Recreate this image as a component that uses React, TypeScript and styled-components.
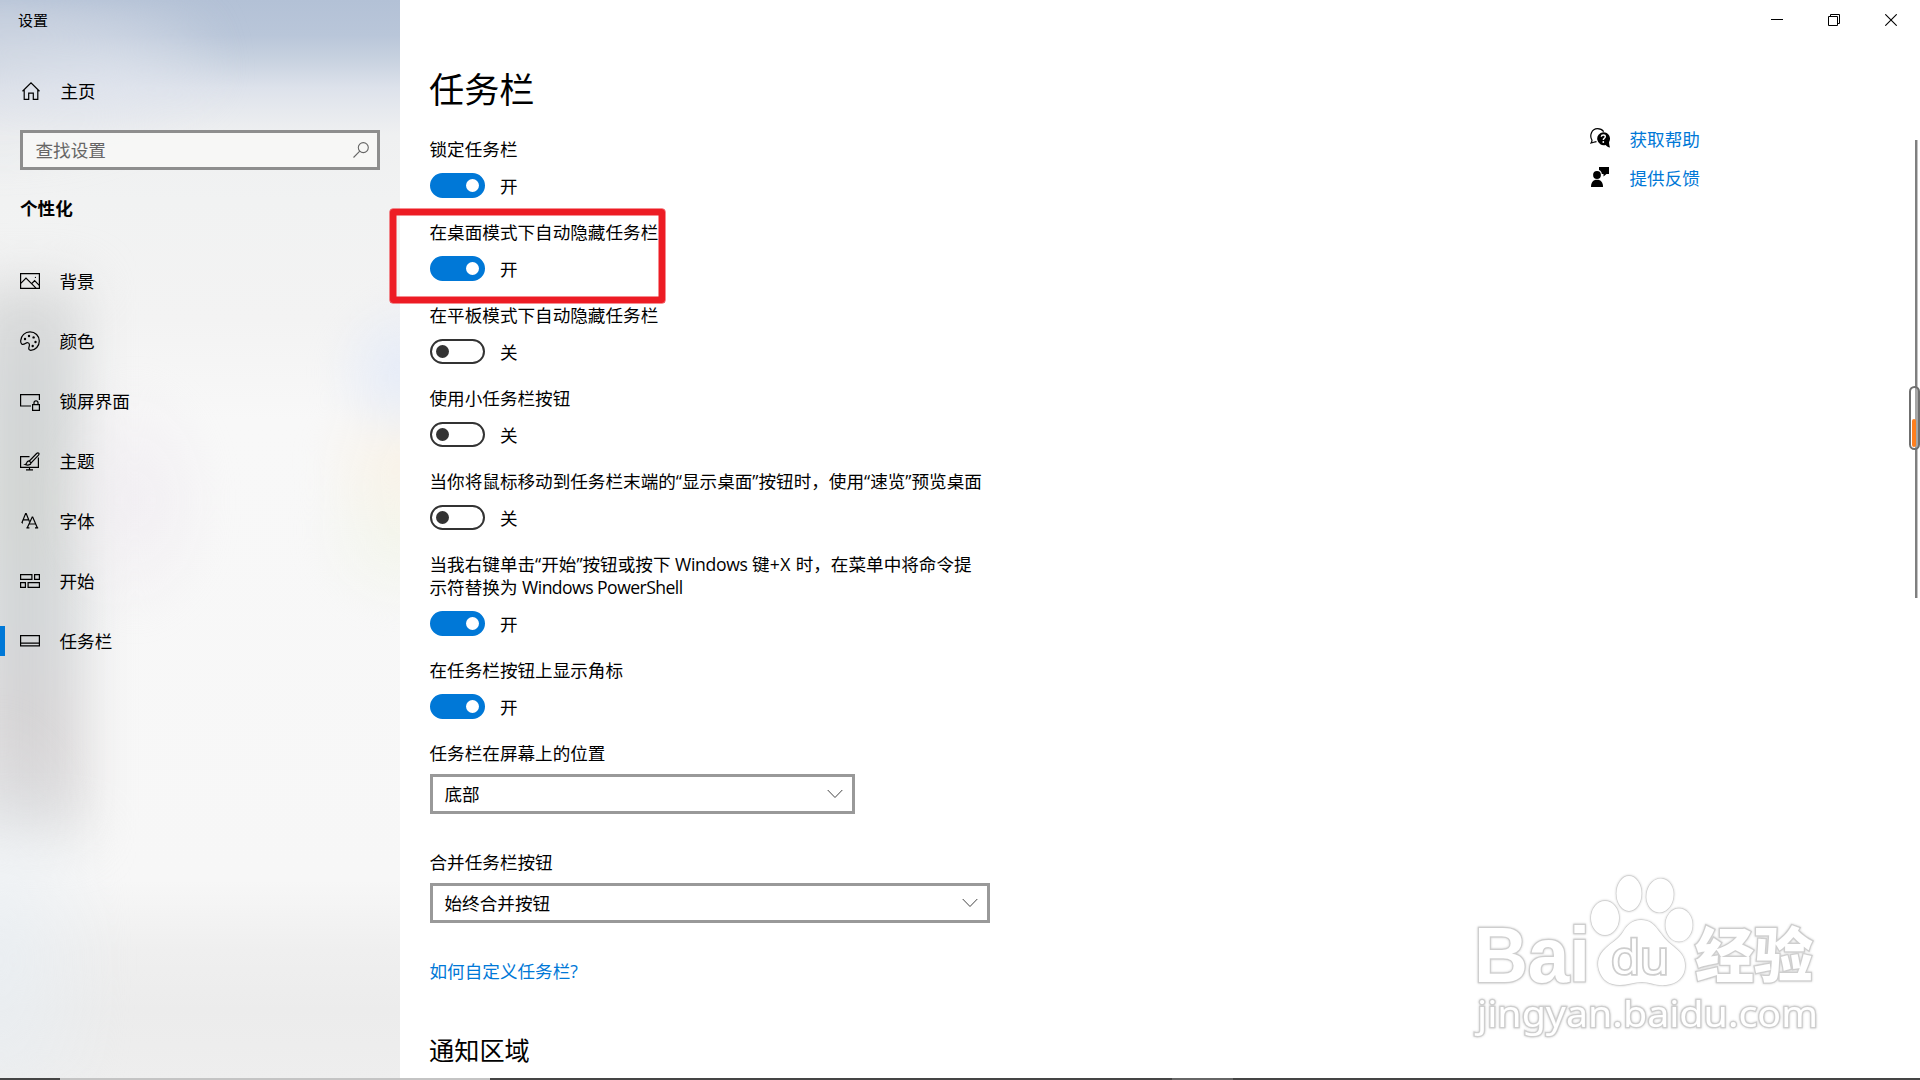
import React, { useState } from 'react';
import styled, { createGlobalStyle } from 'styled-components';

const GlobalStyle = createGlobalStyle`
    *{
        box-sizing:border-box;
    }
    body{
        margin:0;
        overflow:hidden;
        background-color:#ffffff;
        color:#000000;
        font-family:"Open Sans", "Noto Sans CJK SC", sans-serif;
        font-size:17.6px;
        line-height:23px;
    }
`;

const Container = styled.div`
    width:1920px;
    height:1080px;

    position:relative;
    overflow:hidden;
    display:flex;
`;

const Sidebar = styled.aside`
    width:400px;
    height:1080px;

    position:relative;
    overflow:hidden;
    isolation:isolate;
    display:flex;
    flex-direction:column;

    background:linear-gradient(to bottom, #b3c1d6 0px, #b9c6d9 35px, #c8d2e0 60px, #dde2eb 88px, #e6e9ee 110px, #eff0f1 135px, #f1f2f2 200px, #f3f3f3 320px, #f8f8f8 420px, #f7f7f7 880px, #efefef 950px, #ececec 1010px, #eeeeee 1080px);

    /* dark part of the acrylic backdrop */
    &::before{
        content:"";
        position:absolute;
        z-index:-1;
        left:-30px;
        top:285px;
        width:112px;
        height:550px;
        background:linear-gradient(to bottom, #dadbdb 0%, #d2d5d6 20%, #d2d5d3 40%, #d3d6d8 60%, #d6d3d4 85%, #dcdcdd 100%);
        filter:blur(26px);
    }
    /* tinted spots of the acrylic backdrop */
    &::after{
        content:"";
        position:absolute;
        z-index:-1;
        inset:0 -40px 0 -40px;
        background:
            radial-gradient(ellipse 80px 80px at 445px 372px, rgba(224,232,248,0.8), rgba(226,233,248,0)),
            radial-gradient(ellipse 100px 85px at 450px 460px, rgba(249,241,228,0.8), rgba(249,241,228,0)),
            radial-gradient(ellipse 100px 90px at 445px 530px, rgba(241,244,230,0.7), rgba(242,245,230,0)),
            radial-gradient(ellipse 90px 130px at 175px 500px, rgba(236,230,238,0.5), rgba(236,230,238,0)),
            radial-gradient(ellipse 130px 70px at 150px 75px, rgba(228,232,241,0.45), rgba(228,232,241,0)),
            radial-gradient(ellipse 240px 130px at 40px 50px, rgba(218,222,230,0.6), rgba(218,222,230,0)),
            radial-gradient(ellipse 120px 260px at 40px 960px, rgba(232,238,243,0.7), rgba(232,238,243,0));
        filter:blur(12px);
    }
`;

const WindowTitle = styled.div`
    padding:9px 0 0 18px;
    font-size:15px;
    line-height:22px;
`;

const HomeLink = styled.div`
    height:40px;
    margin-top:40px;
    padding-left:22px;

    display:flex;
    align-items:center;
    gap:20.5px;
`;

const SearchBox = styled.div`
    width:360px;
    height:40px;
    margin:19px 0 0 20px;
    padding:0 8px 0 12.5px;

    display:flex;
    align-items:center;
    justify-content:space-between;

    border:3px solid #8e8e8e;
    background-color:rgba(248,248,247,0.85);
    color:#666666;
`;

const SectionName = styled.h2`
    margin:27px 0 31px 20px;
    font-size:17.6px;
    font-weight:700;
    line-height:23px;
`;

const NavItem = styled.div<{ $active?: boolean }>`
    height:60px;

    display:flex;
    align-items:center;

    &::before{
        content:"";
        width:5px;
        height:30px;
        margin-right:15px;
        background-color:${(props) => props.$active ? '#0078d7' : 'transparent'};
    }
    svg{
        margin-right:19.5px;
    }
`;

const Content = styled.main`
    flex:1;
    padding:64px 0 0 30px;

    display:flex;
    flex-direction:column;
    align-items:flex-start;
`;

const Title = styled.h1`
    margin:0 0 24px -1px;
    font-size:35.2px;
    font-weight:400;
    line-height:50px;
`;

const Setting = styled.div`
    margin-bottom:23px;
`;

const Label = styled.div`
    margin-left:-0.5px;
    white-space:pre;
`;

const Latin = styled.span<{ $spacing?: number }>`
    letter-spacing:${(props) => props.$spacing ?? -0.55}px;
`;

const SwitchRow = styled.div`
    height:25px;
    margin-top:12px;

    display:flex;
    align-items:center;
    gap:15px;

    span{
        padding-top:2px;
    }
`;

const Switch = styled.button<{ $on: boolean }>`
    width:55px;
    height:25px;
    padding:0 4px;

    display:flex;
    align-items:center;
    justify-content:${(props) => props.$on ? 'flex-end' : 'flex-start'};

    border:2px solid ${(props) => props.$on ? '#0078d7' : '#333333'};
    border-radius:13px;
    background-color:${(props) => props.$on ? '#0078d7' : '#ffffff'};

    &::after{
        content:"";
        width:13px;
        height:13px;
        border-radius:50%;
        background-color:${(props) => props.$on ? '#ffffff' : '#333333'};
    }
`;

const Field = styled.div`
    margin-bottom:37px;
`;

const Select = styled.div<{ $width: number }>`
    width:${(props) => props.$width}px;
    height:40px;
    margin-top:9px;
    padding:0 9px 0 11.5px;

    display:flex;
    align-items:center;
    justify-content:space-between;

    border:3px solid #999999;
`;

const TextLink = styled.a`
    margin-left:-0.5px;
    color:#0078d7;
    text-decoration:none;
`;

const SubTitle = styled.h2`
    margin:49px 0 0 -1px;
    font-size:25.2px;
    font-weight:400;
    line-height:36px;
`;

const RightSide = styled.div`
    width:330px;

    display:flex;
    flex-direction:column;
`;

const WindowButtons = styled.div`
    height:40px;
    padding-right:23px;

    display:flex;
    align-items:center;
    justify-content:flex-end;
    gap:45px;
`;

const HelpLinks = styled.div`
    margin-top:78px;

    display:flex;
    flex-direction:column;

    a{
        height:39px;
        display:flex;
        align-items:center;
        gap:20px;
    }
    span{
        padding-top:4px;
    }
`;

const HighlightBox = styled.div`
    position:absolute;
    left:390px;
    top:209px;
    width:275px;
    height:94px;
    border:6px solid #ed1c24;
    border-radius:3px;
    box-shadow:0 0 0 0.5px #ed1c24, inset 0 0 0 0.5px #ed1c24;
`;

const ScrollThumb = styled.div`
    position:absolute;
    left:1915px;
    top:140px;
    width:3px;
    height:458px;
    background-color:#7f7f7f;
    border-right:1px solid #c4c4c4;
`;

const EdgeHandle = styled.div`
    position:absolute;
    left:1909px;
    top:386px;
    width:11px;
    height:64px;
    padding:0 0 1px 1px;

    display:flex;
    align-items:flex-end;

    border:2px solid #6f6f6f;
    border-radius:6px;
    background:linear-gradient(to right, #ffffff 4px, #a6a6a6 4px);

    div{
        width:4px;
        height:28px;
        border-radius:2px;
        background-color:#ff7f1e;
    }
`;

const Watermark = styled.svg`
    position:absolute;
    left:1460px;
    top:865px;
    filter:drop-shadow(0 0 1px rgba(0,0,0,0.2));
`;

const TaskbarEdge = styled.div`
    position:absolute;
    left:0;
    bottom:0;
    width:1920px;
    height:2px;
    background:linear-gradient(to right, #454545 60px, #c4c4c4 60px, #c4c4c4 490px, #454545 490px, #454545 1172px, #666666 1172px, #666666 1233px, #454545 1233px);
`;

const Icon = ({ children }: { children: React.ReactNode }) => (
    <svg width="20" height="20" viewBox="0 0 20 20" fill="none" stroke="#000" strokeWidth="1.2">
        {children}
    </svg>
);

const navItems = [
    {
        name:'背景',
        icon:<Icon><path d="M.6 2.6h18.8v14.8H.6zM.8 12.3 6 7l10.3 10.3M11.6 12.6l3-2.9 4.6 4.6" /><circle cx="15.4" cy="6.4" r=".6" fill="#000" stroke="none" /></Icon>,
    },
    {
        name:'颜色',
        icon:(
            <Icon>
                <path d="M.7 9.6C1 4.6 5 .8 10 .8c5.2 0 9.3 4 9.3 9.2 0 5-3.8 9.3-8.6 9.3-1.4 0-2.1-.9-1.9-2.2.3-1.7.9-2.7.5-4-.5-1.6-2.3-1.7-3.5-.9-1.4.9-2.7 1.7-3.9 1C.9 12.6.6 11 .7 9.6z" />
                <g fill="#000" stroke="none">
                    <circle cx="5" cy="8" r="1.2" />
                    <circle cx="9" cy="5" r="1.2" />
                    <circle cx="13.6" cy="6.4" r="1.2" />
                    <circle cx="15.5" cy="11" r="1.2" />
                    <circle cx="12.7" cy="15" r="1.2" />
                </g>
            </Icon>
        ),
    },
    {
        name:'锁屏界面',
        icon:<Icon><path d="M11 15H.6V3.6h18.8V9M12.6 13.6h6.8v5.8h-6.8zM14 13.5v-1.7a2 2 0 0 1 4 0v1.7" /></Icon>,
    },
    {
        name:'主题',
        icon:<Icon><path d="M9.5 5.6H.6v10.8h17.8V6.5M9.5 16.5v2.3M6 18.9h7M18.7 2.2c-.7-.7-1.5-.3-2.1.3L9.3 10l1.8 1.8 7.2-7.5c.6-.6.9-1.5.4-2.1zM9.3 10c-1.7-.2-2.4.9-2.7 2.2-.2.8-.7 1.1-1.5 1.3 2.4.9 5.6.8 6-1.7" /></Icon>,
    },
    {
        name:'字体',
        icon:<Icon><path d="M1.8 12 5.6 2.5h.6l3.2 8M3.1 8.8h5M7.4 16.6 12.2 6h.5l4.5 10.6M9 13h6.7M6.4 16.9h3M15 16.9h3.2M2 12h1" /></Icon>,
    },
    {
        name:'开始',
        icon:<Icon><path d="M.6 3.6h11.3v4.8H.6zM14.6 3.6h4.8v4.8h-4.8zM.6 11.6h4.8v4.8H.6zM8.1 11.6h11.3v4.8H8.1z" /></Icon>,
    },
    {
        name:'任务栏',
        icon:<Icon><path d="M.6 4.6h18.8v10.2H.6zM.6 12.2h18.8" /></Icon>,
    },
];

// full-width comma
const COMMA = '\uFF0C';

const switches = [
    { label:'锁定任务栏', on:true },
    { label:'在桌面模式下自动隐藏任务栏', on:true },
    { label:'在平板模式下自动隐藏任务栏', on:false },
    { label:'使用小任务栏按钮', on:false },
    { label:`当你将鼠标移动到任务栏末端的“显示桌面”按钮时${COMMA}使用“速览”预览桌面`, on:false },
    {
        label:<>当我右键单击“开始”按钮或按下 <Latin $spacing={-0.35}>Windows</Latin> 键<Latin $spacing={0.6}>+X</Latin> 时{COMMA}在菜单中将命令提<br />示符替换为 <Latin>Windows PowerShell</Latin></>,
        on:true,
    },
    { label:'在任务栏按钮上显示角标', on:true },
];

const Chevron = () => (
    <svg width="16" height="10" viewBox="0 0 16 10" fill="none" stroke="#444" strokeWidth="1">
        <path d="M.7 1 8 8.5 15.3 1" />
    </svg>
);

const BaiduMark = () => (
    <Watermark width="370" height="180" viewBox="0 0 370 180" fill="#fff" stroke="#cecece" strokeWidth="1.3" paintOrder="stroke">
        <ellipse cx="145" cy="53" rx="14" ry="17" />
        <ellipse cx="169" cy="28.5" rx="12.5" ry="17.5" />
        <ellipse cx="200" cy="30.5" rx="13.5" ry="17" transform="rotate(8 200 30.5)" />
        <ellipse cx="219" cy="60" rx="13.5" ry="16.5" />
        <path d="M181 55c-9 0-14 5-18 12-5 8-11 10-17 16-8 7-9 15-7 22 3 10 10 15 21 15 8 0 14-3 22-3s14 4 24 3c11-1 19-8 19-19 0-10-5-14-12-20-7-5-10-10-15-16-4-6-9-10-17-10z" />
        <text x="14" y="117" fontFamily='"Liberation Sans", Arial, sans-serif' fontWeight="700" fontSize="78" textLength="116" lengthAdjust="spacingAndGlyphs" strokeWidth="2.5">Bai</text>
        <text x="151" y="109" fontFamily='"Open Sans", sans-serif' fontSize="46" textLength="58" lengthAdjust="spacingAndGlyphs" strokeWidth="3.5">du</text>
        <text x="235" y="112" fontFamily='"Noto Sans CJK SC", sans-serif' fontWeight="900" fontSize="59" textLength="118" lengthAdjust="spacingAndGlyphs" strokeWidth="2.5">经验</text>
        <text x="17" y="162" fontFamily='"Noto Sans", "Open Sans", sans-serif' fontSize="36" textLength="341" lengthAdjust="spacingAndGlyphs" strokeWidth="2.5">jingyan.baidu.com</text>
    </Watermark>
);

const App = () => {
    const [states, setStates] = useState<boolean[]>(switches.map((item) => item.on));

    const toggle = (index: number) => {
        setStates(states.map((on, i) => i === index ? !on : on));
    };

    return (
        <Container>
            <GlobalStyle />
            <Sidebar>
                <WindowTitle>设置</WindowTitle>
                <HomeLink>
                    <svg width="18" height="18" viewBox="0 0 18 18" fill="none" stroke="#000" strokeWidth="1.2">
                        <path d="M.5 9.2 9 .9l8.5 8.3M2.2 7.8v9.5h4.5v-6.2h4.6v6.2h4.5V7.8" />
                    </svg>
                    <span>主页</span>
                </HomeLink>
                <SearchBox>
                    <span>查找设置</span>
                    <svg width="16" height="16" viewBox="0 0 16 16" fill="none" stroke="#666" strokeWidth="1.1">
                        <circle cx="10.3" cy="5.6" r="5" />
                        <path d="M6.8 9.2.5 15.5" />
                    </svg>
                </SearchBox>
                <SectionName>个性化</SectionName>
                {navItems.map((item) => (
                    <NavItem key={item.name} $active={item.name === '任务栏'}>
                        {item.icon}
                        <span>{item.name}</span>
                    </NavItem>
                ))}
            </Sidebar>
            <Content>
                <Title>任务栏</Title>
                {switches.map((item, index) => (
                    <Setting key={index}>
                        <Label>{item.label}</Label>
                        <SwitchRow>
                            <Switch $on={states[index]} onClick={() => toggle(index)} />
                            <span>{states[index] ? '开' : '关'}</span>
                        </SwitchRow>
                    </Setting>
                ))}
                <Field>
                    <Label>任务栏在屏幕上的位置</Label>
                    <Select $width={425}>底部<Chevron /></Select>
                </Field>
                <Field>
                    <Label>合并任务栏按钮</Label>
                    <Select $width={560}>始终合并按钮<Chevron /></Select>
                </Field>
                <TextLink>如何自定义任务栏?</TextLink>
                <SubTitle>通知区域</SubTitle>
            </Content>
            <RightSide>
                <WindowButtons>
                    <svg width="12" height="12" viewBox="0 0 12 12" stroke="#000"><path d="M0 5.5h12" /></svg>
                    <svg width="12" height="12" viewBox="0 0 12 12" fill="none" stroke="#000"><path d="M.5 2.5h9v9h-9zM2.5 2.5v-2h9v9h-2" /></svg>
                    <svg width="12" height="12" viewBox="0 0 12 12" stroke="#000" strokeWidth="1.1"><path d="M.3.3l11.4 11.4M11.7.3.3 11.7" /></svg>
                </WindowButtons>
                <HelpLinks>
                    <TextLink>
                        <svg width="20" height="20" viewBox="0 0 20 20">
                            <path d="M6.5 13.7C4.8 13.8 3.5 14.5 1 15c.8-1 1.1-2 .9-3C-.7 7.5 1.5.8 7.5.7c2.8 0 5 1.3 6.2 3" fill="none" stroke="#000" strokeWidth="1.2" />
                            <path d="M13.3 4.2a6.5 6.5 0 0 1 5.8 9.7c-.2 1.8.3 3.5.9 5.5-1.8-.3-3-1.2-4.4-2.5A6.5 6.5 0 1 1 13.3 4.2z" />
                            <path d="M11.3 8.7c.2-2.3 4-2.3 4 0 0 1.5-2 1.6-2 3.3" fill="none" stroke="#fff" strokeWidth="1.4" />
                            <circle cx="13.3" cy="14" r=".9" fill="#fff" />
                        </svg>
                        <span>获取帮助</span>
                    </TextLink>
                    <TextLink>
                        <svg width="20" height="20" viewBox="0 0 20 20">
                            <circle cx="7" cy="8" r="3.9" />
                            <path d="M1 20c0-4.5 2-7.2 6-7.2s6 2.7 6 7.2z" />
                            <path d="M9 0h10v7h-2.5L13.5 9.5V7h-1.7C11.7 5 10.5 3.5 9 3z" />
                        </svg>
                        <span>提供反馈</span>
                    </TextLink>
                </HelpLinks>
            </RightSide>
            <HighlightBox />
            <ScrollThumb />
            <EdgeHandle><div /></EdgeHandle>
            <BaiduMark />
            <TaskbarEdge />
        </Container>
    );
};

export default App;
